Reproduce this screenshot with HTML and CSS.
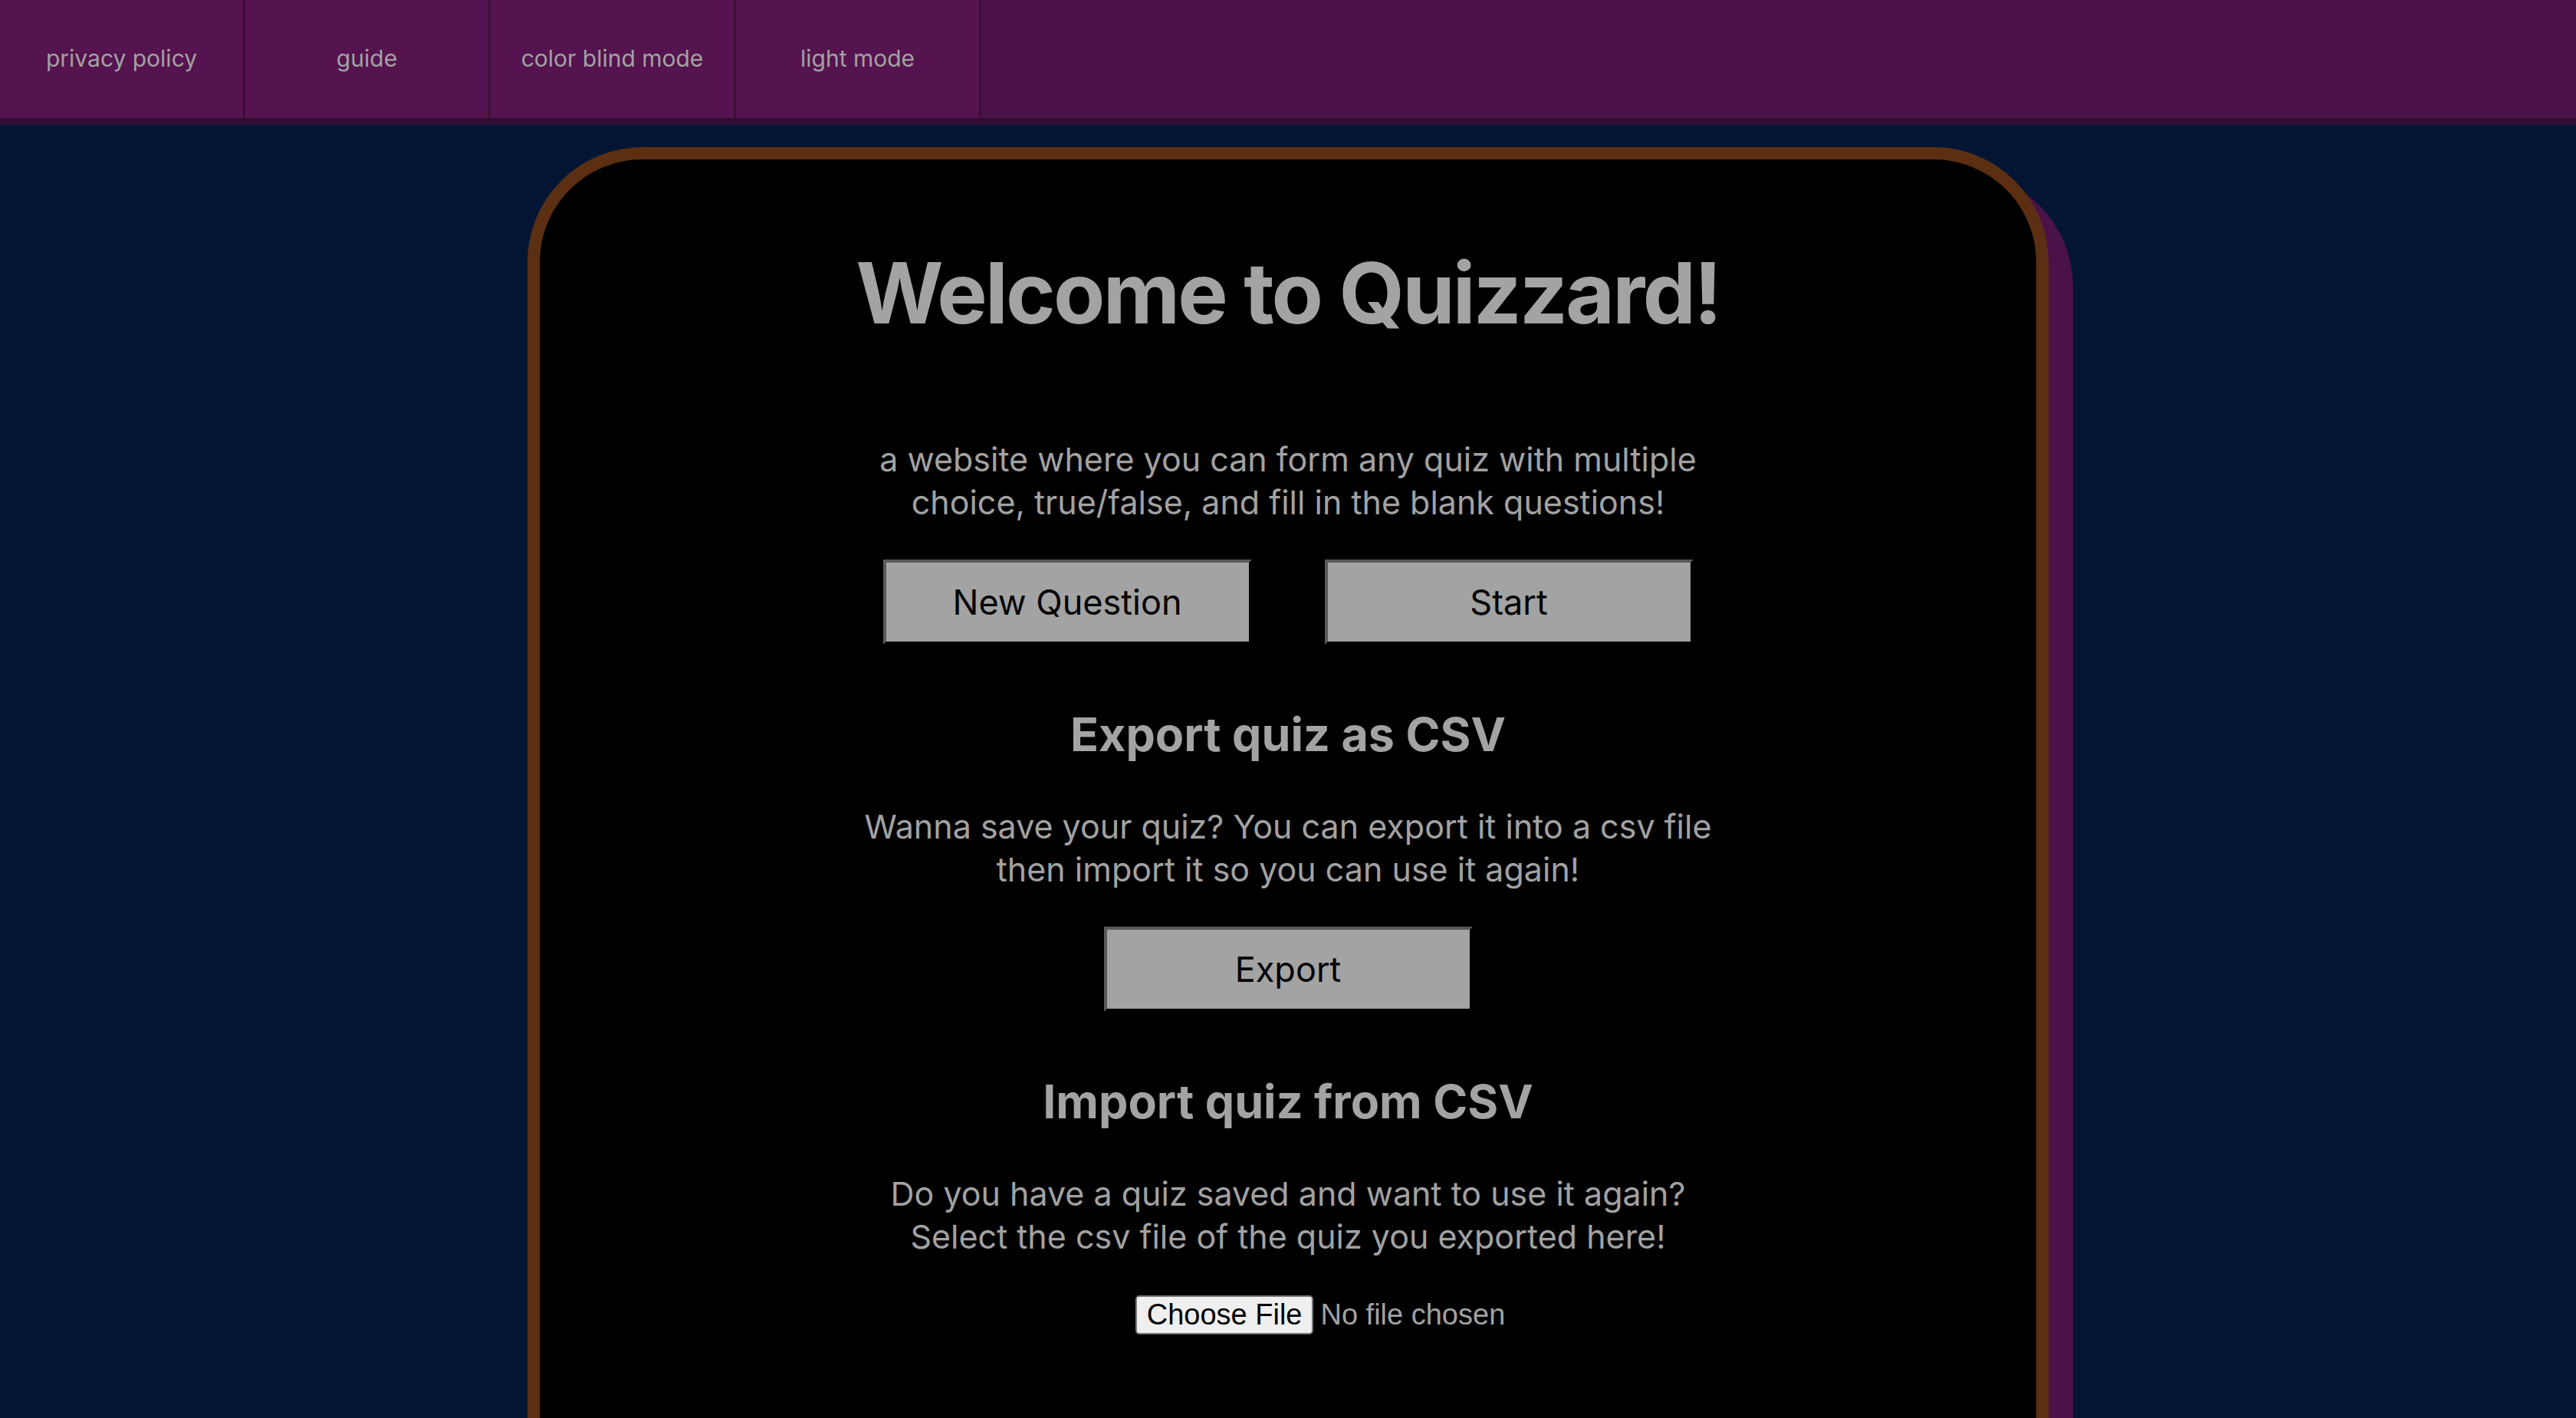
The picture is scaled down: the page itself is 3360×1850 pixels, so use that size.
FILE: index.html
```html
<!DOCTYPE html>
<html lang="en">
<head>
<meta charset="utf-8">
<title>Quizzard</title>
<link rel="stylesheet" href="styles.css">
</head>
<body>
<nav class="topnav">
  <a class="nav-item" href="#">privacy policy</a>
  <a class="nav-item" href="#">guide</a>
  <a class="nav-item" href="#">color blind mode</a>
  <a class="nav-item" href="#">light mode</a>
</nav>
<main class="card">
  <h1 class="title">Welcome to Quizzard!</h1>
  <p class="text text-intro">a website where you can form any quiz with multiple<br>choice, true/false, and fill in the blank questions!</p>
  <div class="btn-row">
    <button class="btn">New Question</button>
    <button class="btn">Start</button>
  </div>
  <h2 class="subtitle">Export quiz as CSV</h2>
  <p class="text text-sub">Wanna save your quiz? You can export it into a csv file<br>then import it so you can use it again!</p>
  <div class="btn-row">
    <button class="btn">Export</button>
  </div>
  <h2 class="subtitle">Import quiz from CSV</h2>
  <p class="text text-sub">Do you have a quiz saved and want to use it again?<br>Select the csv file of the quiz you exported here!</p>
  <div class="file-row">
    <label class="file-btn">Choose File<input class="file-input" type="file" accept=".csv"></label>
    <span class="file-name">No file chosen</span>
  </div>
</main>
</body>
</html>
```

FILE: styles.css
```css
html, body {
  margin: 0;
  padding: 0;
}

body {
  background: #021634;
  font-family: Inter, "Noto Sans", sans-serif;
  color: #a2a2a2;
  min-height: 100vh;
}

.topnav {
  display: flex;
  height: 154px;
  background: #4a1249;
  border-bottom: 9px solid #2f0e33;
}

.nav-item {
  width: 317px;
  flex: none;
  border-right: 3px solid #3a0e37;
  background: #55134f;
  color: #a2a2a2;
  text-decoration: none;
  font-size: 30px;
  display: flex;
  align-items: center;
  justify-content: center;
  padding-bottom: 3px;
}

.card {
  box-sizing: border-box;
  width: 1984px;
  margin: 29px auto 0;
  border: 16px solid #5c2f12;
  border-radius: 150px;
  background: #000;
  box-shadow: 32px 32px 0 #4a1249;
  padding: 108px 0 260px;
  display: flex;
  flex-direction: column;
  align-items: center;
  text-align: center;
}

.title {
  margin: 0;
  font-size: 110px;
  font-weight: 700;
  line-height: 133px;
  letter-spacing: -2.8px;
  color: #a3a3a3;
}

.text {
  margin: 0;
  font-size: 43px;
  line-height: 56px;
}

.text-intro {
  margin-top: 122px;
}

.text-sub {
  margin-top: 48px;
}

.btn-row {
  display: flex;
  gap: 95px;
  margin-top: 47px;
}

.btn {
  box-sizing: border-box;
  width: 481px;
  height: 111px;
  background: #a3a3a3;
  border: 4px solid;
  border-color: #5a5a5a #000 #000 #5a5a5a;
  color: #000;
  font-family: Inter, "Noto Sans", sans-serif;
  font-size: 45px;
  padding: 0;
  cursor: pointer;
}

.subtitle {
  margin: 74px 0 0;
  font-size: 61px;
  font-weight: 700;
  line-height: 87px;
  color: #a3a3a3;
}

.file-row {
  margin-top: 49px;
  padding-left: 84px;
  display: flex;
  align-items: center;
  gap: 9px;
  font-family: "Liberation Sans", Arial, sans-serif;
  font-size: 38px;
}

.file-btn {
  box-sizing: border-box;
  height: 51px;
  display: flex;
  align-items: center;
  padding: 0 13px;
  background: #efefef;
  color: #000;
  border: 2px solid #767676;
  border-radius: 5px;
  cursor: pointer;
}

.file-input {
  display: none;
}

.file-name {
  color: #a2a2a2;
}
```
